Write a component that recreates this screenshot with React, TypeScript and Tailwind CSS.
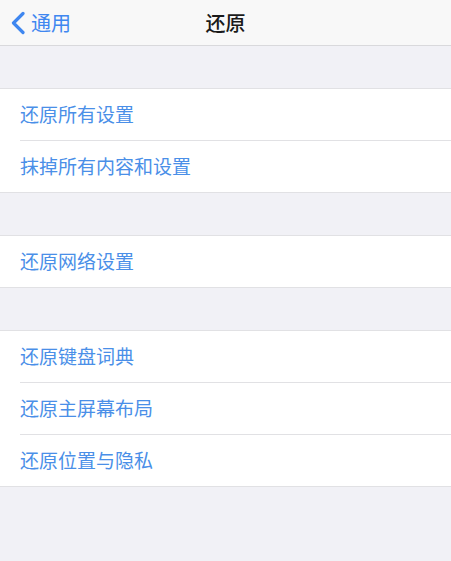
const font = { fontFamily: '"Noto Sans CJK SC", "Noto Sans", sans-serif' };

const groups: string[][] = [
  ["还原所有设置", "抹掉所有内容和设置"],
  ["还原网络设置"],
  ["还原键盘词典", "还原主屏幕布局", "还原位置与隐私"],
];

export default function App() {
  return (
    <div className="flex h-[561px] w-[451px] flex-col bg-[#f1f1f6]" style={font}>
      <header className="relative flex h-[46px] flex-none items-center justify-center border-b border-[#d9d9dc] bg-[#f8f8f8]">
        <button className="absolute left-[11px] top-0 flex h-full items-center gap-[6px] text-[#3f87f0]">
          <svg viewBox="0 0 14 24" className="h-[24px] w-[14px]" fill="none" stroke="currentColor" strokeWidth="3.2" strokeLinecap="round" strokeLinejoin="round">
            <polyline points="12,2.5 2.5,12 12,21.5" />
          </svg>
          <span className="text-[20px] leading-none">通用</span>
        </button>
        <h1 className="text-[20px] font-medium leading-none text-[#1a1a1a]">还原</h1>
      </header>

      {groups.map((g, i) => (
        <div key={i} className="mt-[42px] border-y border-[#e1e1e4] bg-white">
          {g.map((label, j) => (
            <div key={label} className="pl-[20px]">
              <div
                className={`flex items-center text-[19px] text-[#4a8fe8] ${
                  j < g.length - 1 ? "h-[52px] border-b border-[#e1e1e4]" : "h-[51px]"
                }`}
              >
                {label}
              </div>
            </div>
          ))}
        </div>
      ))}
    </div>
  );
}
